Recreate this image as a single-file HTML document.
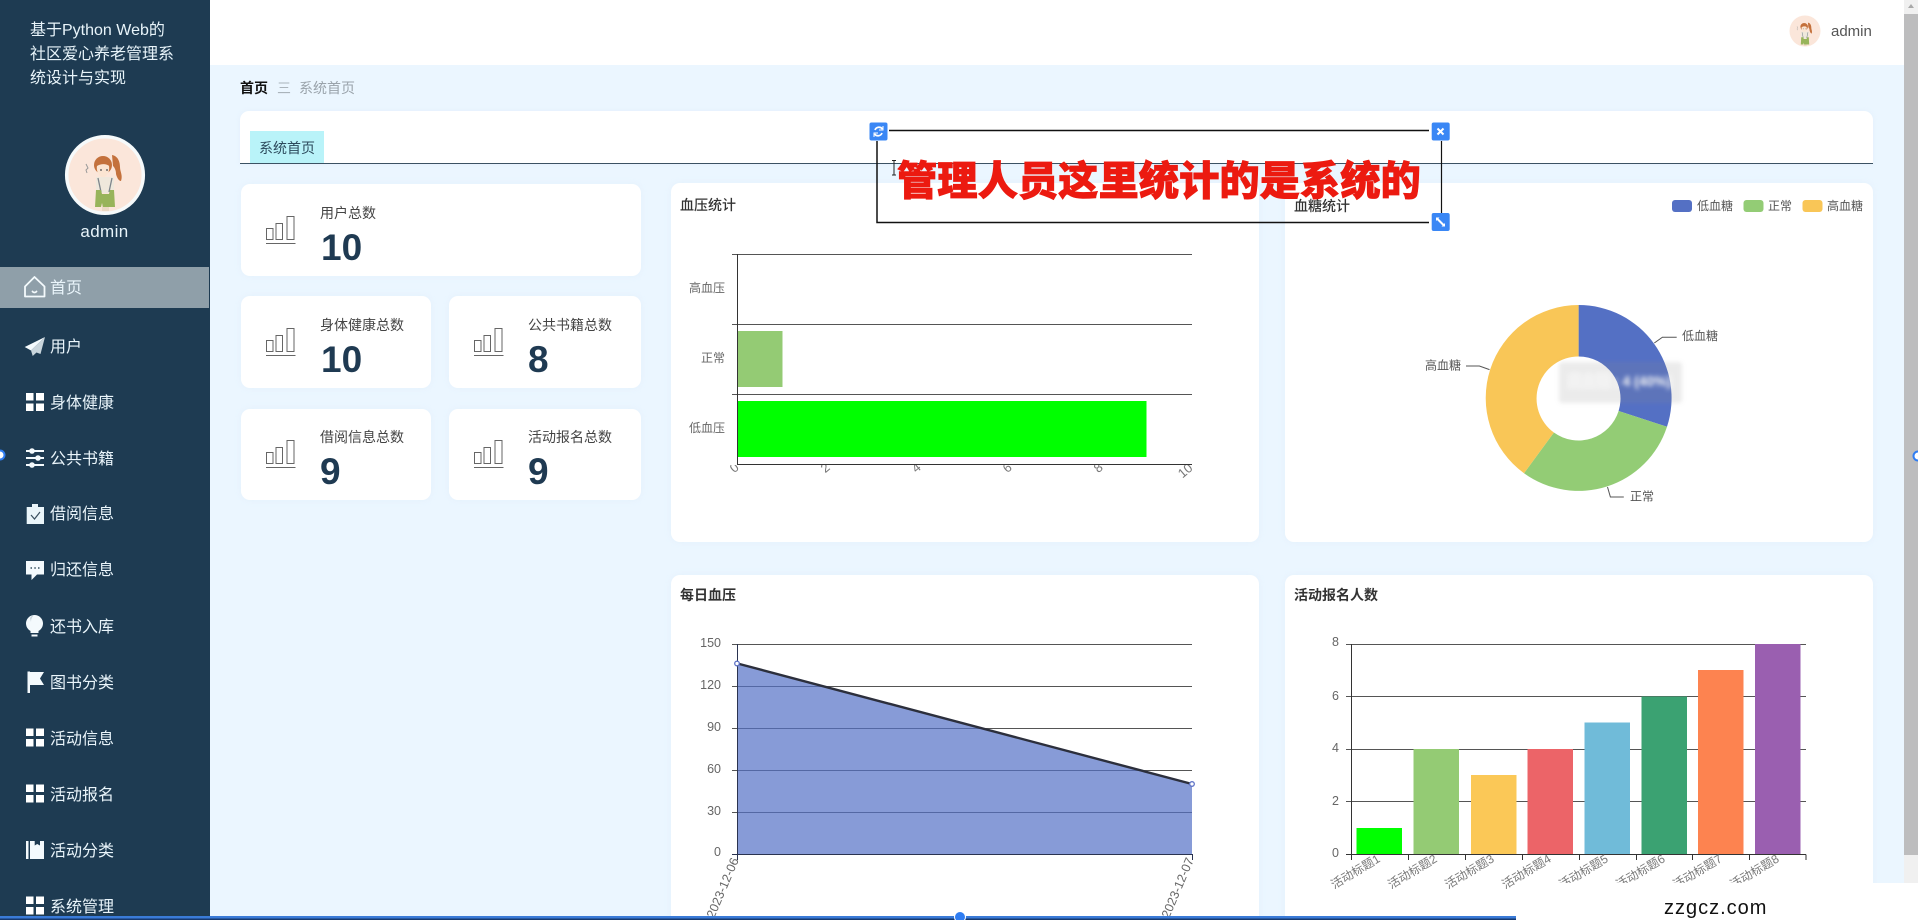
<!DOCTYPE html>
<html lang="zh"><head><meta charset="utf-8"><title>系统首页</title>
<style>
html{margin:0;padding:0;width:1918px;height:920px;overflow:hidden;background:#ebf6ff}
body{margin:0;padding:0;position:relative;width:1918px;height:920px;overflow:hidden;background:#ebf6ff;font-family:"Liberation Sans","Noto Sans CJK SC",sans-serif;filter:blur(.35px)}
div{position:absolute;box-sizing:border-box}
.m{left:50px;font-size:16px;line-height:24px;color:#eaf5fb;white-space:nowrap}
.c{background:#fff;border-radius:9px;box-shadow:0 0 6px rgba(225,238,250,.7)}
.l{font-size:14px;line-height:20px;color:#444;white-space:nowrap}
.v{font-size:37px;line-height:40px;font-weight:700;color:#1f3a52}
svg{position:absolute;left:0;top:0}
svg text{font-family:"Liberation Sans","Noto Sans CJK SC",sans-serif}
</style></head><body>
<div style="left:210px;top:0;width:1708px;height:65px;background:#fff"></div>
<div style="left:0;top:0;width:210px;height:920px;background:#1e3b52"></div>
<div style="left:30px;top:19px;width:170px;font-size:16px;line-height:24px;color:#e8f4fa;white-space:nowrap">基于Python Web的<br>社区爱心养老管理系<br>统设计与实现</div>
<div style="left:0;top:222px;width:209px;text-align:center;font-size:17px;line-height:20px;letter-spacing:.4px;color:#e8f4fa">admin</div>
<div style="left:0;top:267px;width:209px;height:41px;background:#8f9fa9"></div>
<div class="m" style="top:277px">首页</div>
<div class="m" style="top:336px">用户</div>
<div class="m" style="top:392px">身体健康</div>
<div class="m" style="top:448px">公共书籍</div>
<div class="m" style="top:503px">借阅信息</div>
<div class="m" style="top:559px">归还信息</div>
<div class="m" style="top:616px">还书入库</div>
<div class="m" style="top:672px">图书分类</div>
<div class="m" style="top:728px">活动信息</div>
<div class="m" style="top:784px">活动报名</div>
<div class="m" style="top:840px">活动分类</div>
<div class="m" style="top:896px">系统管理</div>

<div style="left:240px;top:78px;font-size:14px;line-height:20px;font-weight:700;color:#111">首页</div>
<div style="left:277px;top:78px;font-size:14px;line-height:20px;color:#aab4bb">三</div>
<div style="left:299px;top:78px;font-size:14px;line-height:20px;color:#9aa3ab;white-space:nowrap">系统首页</div>
<div style="left:1831px;top:22px;font-size:15px;line-height:20px;color:#555">admin</div>

<div style="left:240px;top:111px;width:1633px;height:53px;background:#fff;border-radius:9px 9px 0 0;border-bottom:1px solid #3b5263;box-shadow:0 0 4px rgba(225,238,250,.8)"></div>
<div style="left:250px;top:131px;width:74px;height:32px;background:#b9f3f9;color:#2c4a5c;font-size:14px;line-height:34px;text-align:center">系统首页</div>

<div class="c" style="left:241px;top:184px;width:400px;height:92px"></div>
<div class="c" style="left:241px;top:296px;width:190px;height:92px"></div>
<div class="c" style="left:449px;top:296px;width:192px;height:92px"></div>
<div class="c" style="left:241px;top:409px;width:190px;height:91px"></div>
<div class="c" style="left:449px;top:409px;width:192px;height:91px"></div>
<div class="l" style="left:320px;top:203px">用户总数</div><div class="v" style="left:321px;top:228px">10</div>
<div class="l" style="left:320px;top:315px">身体健康总数</div><div class="v" style="left:321px;top:340px">10</div>
<div class="l" style="left:528px;top:315px">公共书籍总数</div><div class="v" style="left:528px;top:340px">8</div>
<div class="l" style="left:320px;top:427px">借阅信息总数</div><div class="v" style="left:320px;top:452px">9</div>
<div class="l" style="left:528px;top:427px">活动报名总数</div><div class="v" style="left:528px;top:452px">9</div>

<div class="c" style="left:671px;top:183px;width:588px;height:359px"></div>
<div class="c" style="left:1285px;top:183px;width:588px;height:359px"></div>
<div class="c" style="left:671px;top:575px;width:588px;height:345px;border-radius:9px 9px 0 0"></div>
<div class="c" style="left:1285px;top:575px;width:588px;height:345px;border-radius:9px 9px 0 0"></div>

<svg width="1918" height="920" viewBox="0 0 1918 920">
<defs>
<symbol id="st" overflow="visible"><g fill="none" stroke="#666" stroke-width="1"><rect x=".5" y="12.5" width="6.5" height="11"/><rect x="10" y="7.5" width="6.5" height="16"/><rect x="21" y=".5" width="7" height="23"/><path d="M0 27.5H29.5"/></g></symbol>
<symbol id="gr" overflow="visible"><path fill="#fff" d="M0 0h7.5v7.5H0zM10 0h8v7.5h-8zM0 10.5h7.5V18H0zM10 10.5h8V18h-8z"/></symbol>
<symbol id="girl" overflow="visible">
 <path fill="#ecd9c4" d="M-3 30h7v6h-7z"/>
 <path fill="#efe8dc" d="M-9 2h18v16H-9z"/>
 <path d="M-7 3l3 14M7 3l-3 14" stroke="#7d858c" stroke-width="1.3" fill="none"/>
 <path fill="#98b45a" d="M-9 15h5l1 4h7l1-4h4l1 17H-2l-1-4-1 4h-6z"/>
 <path fill="#c4713c" d="M7-20c6 1 8 7 8 12s3 8 1 14c-2 0-4-3-5-7 0-3-1-6-3-8z"/>
 <circle cx="-2" cy="-10" r="9" fill="#c4713c"/>
 <path fill="#fbe5d2" d="M-8-9c3-2 9-3 12 0 1 5-2 11-6 11s-7-6-6-11z"/>
 <path d="M-5-5h2M1-5h2" stroke="#555" stroke-width="1.2"/>
 <path d="M-19-11l2 4-2 2 1 3" stroke="#999" stroke-width="1" fill="none"/>
</symbol>
<clipPath id="xclip"><rect x="720" y="465" width="490" height="20"/></clipPath>
<filter id="bl" x="-10%" y="-20%" width="120%" height="140%"><feGaussianBlur stdDeviation="2"/></filter>
</defs>

<!-- avatars -->
<circle cx="105" cy="175" r="38.3" fill="#fbe6da" stroke="#f6fafb" stroke-width="3.5"/>
<use href="#girl" x="105" y="175"/>
<circle cx="1805" cy="31" r="15.5" fill="#fbe6da"/>
<use href="#girl" transform="translate(1805 31) scale(.42)"/>

<!-- menu icons -->
<g fill="none" stroke="#f4fafd" stroke-width="1.8" stroke-linejoin="round" stroke-linecap="round">
<path d="M25 286.5L34.5 277 44.5 286.5V296.500H25z"/><path d="M32.500 291.500c1 1.300 3 1.300 4 0"/>
</g>
<path fill="#f4fafd" d="M45 337L24.700 347l6.300 3.500z"/><path fill="#c9d5dc" d="M45 337L31 350.500l1.700 5.500 3.800-3.500 4 1.500z"/>
<use href="#gr" x="26" y="393"/><use href="#gr" x="26" y="728.500"/><use href="#gr" x="26" y="784.500"/><use href="#gr" x="26" y="896.500"/>
<g stroke="#f4fafd" stroke-width="2" fill="#f4fafd"><path d="M26 451h18M26 458h18M26 465h18" fill="none"/><circle cx="32" cy="451" r="1.800"/><circle cx="38" cy="458" r="1.800"/><circle cx="32" cy="465" r="1.800"/></g>
<path fill="#eaf5fa" d="M26.700 507h5.300v-3h6v3h6v17H26.700z"/><path d="M31 515l3.500 4 5.500-7" fill="none" stroke="#3a5060" stroke-width="1.200"/>
<path fill="#f4fafd" d="M26 561h18v13.500H37l-5.500 5.500v-5.500H26z"/><path d="M30.500 568h1.500M34.300 568h1.500M38 568h1.500" stroke="#35505f" stroke-width="1.500"/>
<circle cx="34.500" cy="623.500" r="8.500" fill="#f4fafd"/><path fill="#f4fafd" d="M30.500 630h8v3h-8zM31.500 634.500h6v2h-6z"/>
<path fill="#c7d4dc" d="M30 618c1-2 3-3 4-3-2 2-3 4-3 7z"/>
<path fill="#f4fafd" d="M27.500 671.500h2.500v21.500h-2.500zM30 672h14l-4 6.500 4 6.500H30z"/>
<path fill="#f4fafd" d="M26 841h2.500v18H26zM30 841h4.700v4.500l2.500-1.500 2.800 1.500V841h4v18H30z"/>

<!-- stat icons -->
<use href="#st" x="266" y="216"/><use href="#st" x="266" y="328"/><use href="#st" x="474" y="328"/><use href="#st" x="266" y="440"/><use href="#st" x="474" y="440"/>

<!-- titles -->
<g font-size="14" fill="#333" font-weight="500" dominant-baseline="central">
<text x="680" y="205">血压统计</text><text x="1294" y="206">血糖统计</text>
<text x="680" y="595" font-weight="700">每日血压</text><text x="1294" y="595" font-weight="700">活动报名人数</text>
</g>

<!-- chart 1 -->
<g stroke="#555" stroke-width="1" fill="none"><path d="M732 254.500H1192M732 324.500H1192M732 394.500H1192"/></g>
<rect x="737" y="331" width="45.500" height="56" fill="#94cb74"/>
<rect x="737" y="401" width="409.500" height="56" fill="#00ff00"/>
<path d="M737.500 254V464.500H1192" stroke="#333" fill="none"/>
<g font-size="12" fill="#666" text-anchor="end" dominant-baseline="central"><text x="725" y="288">高血压</text><text x="725" y="358">正常</text><text x="725" y="428">低血压</text></g>
<g font-size="13" fill="#777" text-anchor="middle" clip-path="url(#xclip)">
<text transform="translate(737 471) rotate(-40)">0</text><text transform="translate(828 471) rotate(-40)">2</text><text transform="translate(919 471) rotate(-40)">4</text><text transform="translate(1010 471) rotate(-40)">6</text><text transform="translate(1101 471) rotate(-40)">8</text><text transform="translate(1188 474) rotate(-40)">10</text>
</g>

<!-- chart 2 -->
<g>
<path fill="#5470c4" d="M1578.600 305A93 93 0 0 1 1667 426.800L1618.600 411A42 42 0 0 0 1578.600 356.500z"/>
<path fill="#93cc75" d="M1667 426.800A93 93 0 0 1 1524 473.200L1553.900 432.500A42 42 0 0 0 1618.600 411z"/>
<path fill="#f9c657" d="M1524 473.200A93 93 0 0 1 1578.600 305V356.500A42 42 0 0 0 1553.900 432.500z"/>
</g>
<g fill="none" stroke="#555" stroke-width="1"><path d="M1654.300 343L1662.400 337.200H1676.700M1466 366H1479.400L1489.500 369.600M1607.500 487L1610.400 497H1623.800"/></g>
<g font-size="12" fill="#555" dominant-baseline="central"><text x="1682" y="336">低血糖</text><text x="1425" y="365.500">高血糖</text><text x="1630" y="496.500">正常</text>
<text x="1697" y="206">低血糖</text><text x="1768" y="206">正常</text><text x="1827" y="206">高血糖</text></g>
<rect x="1672" y="200" width="20" height="12" rx="3" fill="#5470c4"/><rect x="1743.500" y="200" width="20" height="12" rx="3" fill="#93cc75"/><rect x="1802.500" y="200" width="20" height="12" rx="3" fill="#f9c657"/>
<g filter="url(#bl)"><rect x="1559" y="362" width="123" height="41" rx="3" fill="#8a8a8a" fill-opacity=".17"/><text x="1568" y="386" font-size="14" font-weight="700" fill="#f4f4f4">高血糖 : 4 (40%)</text></g>

<!-- chart 3 -->
<g stroke="#555" fill="none"><path d="M732 644.500H1192M732 686.500H1192M732 728.500H1192M732 770.500H1192M732 812.500H1192"/></g>
<path d="M737.500 663.500L1192 784V854.500H737.500z" fill="#5470c6" fill-opacity=".7"/>
<path d="M737.500 644V854.500H1192.500V860M732 854.500H738M737.500 854.500V860" stroke="#2a3350" fill="none"/>
<path d="M737.500 663.500L1192 784" stroke="#2c2f3c" stroke-width="2.400" fill="none"/>
<circle cx="737" cy="663.500" r="2.300" fill="#fff" stroke="#5f73c6" stroke-width="1.300"/><circle cx="1192" cy="784" r="2.300" fill="#fff" stroke="#5f73c6" stroke-width="1.300"/>
<g font-size="12.500" fill="#666" text-anchor="end" dominant-baseline="central"><text x="721" y="643">150</text><text x="721" y="685">120</text><text x="721" y="727">90</text><text x="721" y="769">60</text><text x="721" y="811">30</text><text x="721" y="852">0</text></g>
<g font-size="12.500" fill="#666" text-anchor="end"><text transform="translate(739 860) rotate(-67)">2023-12-06</text><text transform="translate(1194 860) rotate(-67)">2023-12-07</text></g>

<!-- chart 4 -->
<g stroke="#555" fill="none"><path d="M1346 644.500H1806M1346 696.500H1806M1346 749.500H1806M1346 801.500H1806"/></g>
<rect x="1356.500" y="828" width="45.500" height="26" fill="#00ff00"/>
<rect x="1413.500" y="749" width="45.500" height="105" fill="#94cb74"/>
<rect x="1471" y="775" width="45.500" height="79" fill="#fbc857"/>
<rect x="1527.500" y="749" width="45.500" height="105" fill="#ec6468"/>
<rect x="1584.500" y="722.500" width="45.500" height="131.500" fill="#70bbd9"/>
<rect x="1641.500" y="696.500" width="45.500" height="157.500" fill="#3ba272"/>
<rect x="1698" y="670" width="45.500" height="184" fill="#fd8350"/>
<rect x="1755" y="644" width="45.500" height="210" fill="#9a5fb0"/>
<path d="M1351.500 644V854.500H1806M1346 854.500H1352M1351.500 854.500V860M1408.500 854.500V860M1465.500 854.500V860M1522.500 854.500V860M1579.500 854.500V860M1636.500 854.500V860M1692.500 854.500V860M1749.500 854.500V860M1806 854.500V860" stroke="#333" fill="none"/>
<g font-size="12.500" fill="#666" text-anchor="end" dominant-baseline="central"><text x="1339" y="642">8</text><text x="1339" y="696">6</text><text x="1339" y="748">4</text><text x="1339" y="801">2</text><text x="1339" y="853">0</text></g>
<g font-size="12" fill="#777" text-anchor="end">
<text transform="translate(1381 861) rotate(-31)">活动标题1</text><text transform="translate(1438 861) rotate(-31)">活动标题2</text><text transform="translate(1495 861) rotate(-31)">活动标题3</text><text transform="translate(1552 861) rotate(-31)">活动标题4</text><text transform="translate(1609 861) rotate(-31)">活动标题5</text><text transform="translate(1666 861) rotate(-31)">活动标题6</text><text transform="translate(1723 861) rotate(-31)">活动标题7</text><text transform="translate(1780 861) rotate(-31)">活动标题8</text>
</g>

<!-- scrollbar -->
<rect x="1904" y="0" width="14" height="883" fill="#f0f0f0"/>
<rect x="1904" y="14" width="14" height="841" fill="#bdbdbe"/>
<path d="M1908 8l3-4 3 4z" fill="#a8a8a8"/>

<!-- bottom -->
<rect x="1516" y="883" width="402" height="37" fill="#fff"/>
<text x="1664" y="914" font-size="20" letter-spacing="1" fill="#111">zzgcz.com</text>
<rect x="0" y="916" width="1516" height="2.500" fill="#3a7bd8"/><rect x="0" y="918.500" width="1516" height="1.500" fill="#17396e"/>
<circle cx="960" cy="917" r="5.500" fill="#2f7df2" stroke="#fff" stroke-width="1"/>
<circle cx="0" cy="455" r="4.500" fill="#fff" stroke="#2f7df2" stroke-width="2"/>
<circle cx="1918" cy="456" r="4.500" fill="#fff" stroke="#2f7df2" stroke-width="2"/>

<!-- annotation -->
<g stroke="#111" fill="none"><path d="M889 130.500H1429M877 141V222.500H1429" stroke-width="1.500"/><path d="M1441.500 141V213" stroke-width="1.200"/></g>
<text x="897" y="195" font-size="40.300" font-weight="900" fill="#ec1a10" stroke="#ec1a10" stroke-width=".8" style="paint-order:stroke">管理人员这里统计的是系统的</text>
<path d="M892 160.500h4M892 175h4M894 160.500V175" stroke="#222" stroke-width="1" fill="none"/>
<rect x="869.500" y="122.500" width="18" height="18" rx="2" fill="#3a87f5"/>
<rect x="1431.700" y="122.500" width="18" height="18" rx="2" fill="#3a87f5"/>
<rect x="1431.700" y="213" width="18" height="18" rx="2" fill="#3a87f5"/>
<path d="M882.500 129a4.300 4.300 0 0 0-7.500 1M874.500 134a4.300 4.300 0 0 0 7.500-1" stroke="#fff" stroke-width="1.700" fill="none"/><path d="M883 126v4h-4M874 137v-4h4" stroke="#fff" stroke-width="1" fill="none"/>
<path d="M1437.500 128.500l6 6M1443.500 128.500l-6 6" stroke="#fff" stroke-width="2"/>
<path d="M1437 218.500l7 7" stroke="#fff" stroke-width="2"/><path d="M1436 217.500h3.500l-3.500 3.500zM1445 226.500h-3.500l3.500-3.500z" fill="#fff"/>
</svg>
</body></html>
